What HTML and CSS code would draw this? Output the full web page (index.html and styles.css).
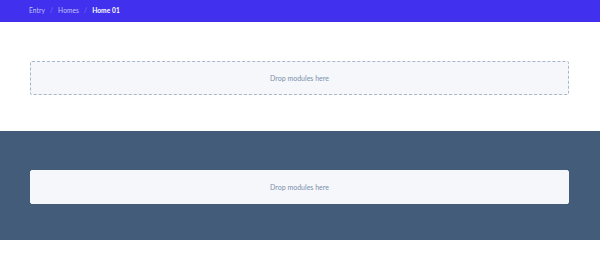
FILE: index.html
```html
<!DOCTYPE html>
<html lang="en">
<head>
  <meta charset="UTF-8">
  <meta name="viewport" content="width=device-width, initial-scale=1">
  <title>Home 01</title>
  <link rel="stylesheet" href="styles.css">
</head>
<body>

  <header class="topbar">
    <nav class="crumbs">
      <a class="crumb" href="#">Entry</a>
      <span class="sep">/</span>
      <a class="crumb" href="#">Homes</a>
      <span class="sep">/</span>
      <span class="crumb current">Home 01</span>
    </nav>
  </header>

  <section class="zone zone-light">
    <div class="dropzone dashed">Drop modules here</div>
  </section>

  <section class="zone zone-dark">
    <div class="dropzone">Drop modules here</div>
  </section>

  <div class="tail"></div>

</body>
</html>
```

FILE: styles.css
```css
body {
  margin: 0;
  padding: 0;
  font-family: Lato, "Noto Sans", sans-serif;
  background: #fff;
}

.topbar {
  height: 22px;
  box-sizing: border-box;
  background: #4130ee;
  display: flex;
  align-items: center;
  padding: 0 29px 2px;
}

.crumbs {
  display: flex;
  align-items: center;
  gap: 4px;
  font-family: Lato, "Noto Sans", sans-serif;
  font-size: 6.6px;
  letter-spacing: 0.1px;
}

.crumb {
  color: #c2c4f7;
  text-decoration: none;
}

.crumb.current {
  color: #fff;
  font-weight: 700;
}

.sep {
  color: #7f78f2;
  margin: 0 1px;
}

.zone {
  padding: 39px 31px 36px 30px;
}

.zone-dark {
  background: #425c7a;
}

.dropzone {
  height: 34px;
  box-sizing: border-box;
  background: #f5f7fa;
  border: 1px solid #f5f7fa;
  border-radius: 2px;
  display: flex;
  align-items: center;
  justify-content: center;
  font-size: 7px;
  color: #7b90ae;
}

.dropzone.dashed {
  border: 1px dashed #a9b7cc;
}

.tail {
  height: 26px;
}
```
